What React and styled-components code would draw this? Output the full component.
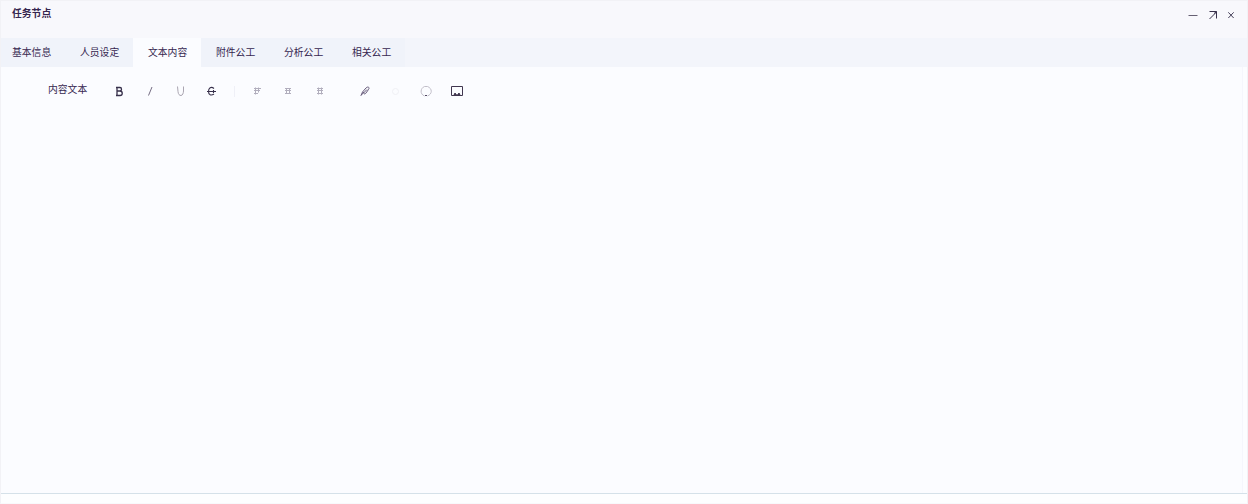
import React, { useState } from "react";
import styled, { createGlobalStyle } from "styled-components";

const GlobalStyle = createGlobalStyle`
    * {
        box-sizing: border-box;
    }
    body {
        margin: 0;
        background-color: #fcfdff;
        font-family: "Liberation Sans", "Noto Sans CJK SC", sans-serif;
    }
`;

const Window = styled.div`
    height: 504px;
    display: flex;
    flex-direction: column;
    border: 1px solid #f2f2f6;
    border-bottom-color: #f8f9fc;
    color: #35264f;
`;

const TitleBar = styled.header`
    height: 37px;
    display: flex;
    justify-content: space-between;
    padding: 5px 12px 0 11px;
    background-color: #f8f8fc;
`;

const Title = styled.h1`
    margin: 0;
    font-size: 9.8px;
    line-height: 15px;
    font-weight: 700;
`;

const Controls = styled.div`
    display: flex;
    gap: 8px;
    padding-top: 3px;
`;

const IconButton = styled.button`
    display: flex;
    align-items: center;
    justify-content: center;
    width: ${({ $width }) => $width || 12}px;
    height: 12px;
    padding: 0;
    border: none;
    background: none;
    color: ${({ $color }) => $color || "#37304b"};
    cursor: pointer;
`;

const TabBar = styled.nav`
    height: 29px;
    display: flex;
    background-color: #f3f5fb;
`;

const Tab = styled.button`
    width: ${({ $width }) => $width}px;
    padding: 0 0 2px ${({ $first }) => ($first ? 11 : 15)}px;
    border: none;
    background-color: ${({ $active }) => ($active ? "#fbfcff" : "#f0f3fa")};
    color: inherit;
    font-family: inherit;
    font-size: 9.8px;
    text-align: left;
    white-space: nowrap;
    cursor: pointer;
`;

const Editor = styled.main`
    flex: 1;
    margin: 0 4px 0 0;
    border-right: 1px solid #f5f6fc;
    background-color: #fbfcff;
`;

const Toolbar = styled.div`
    display: flex;
    align-items: center;
    height: 48px;
    padding-left: 47px;
`;

const FieldLabel = styled.span`
    width: 63px;
    padding-bottom: 4px;
    font-size: 9.8px;
`;

const Tools = styled.div`
    display: flex;
    align-items: center;
    gap: ${({ $gap }) => $gap}px;

    button {
        width: 16px;
    }
`;

const Divider = styled.span`
    width: 1px;
    height: 11px;
    margin: 0 14px 0 15px;
    background-color: #eff0f7;
`;

const Spacer = styled.span`
    width: 29px;
`;

const Footer = styled.footer`
    height: 10px;
    border-top: 1px solid #d5e1e9;
    background-color: #fdfeff;
`;

const Icon = ({ size = 12, width = 1, children }) => (
    <svg width={size} height={size} viewBox="0 0 12 12" fill="none" stroke="currentColor" strokeWidth={width}>
        {children}
    </svg>
);

const tabs = [
    { label: "基本信息", width: 64 },
    { label: "人员设定", width: 68 },
    { label: "文本内容", width: 68 },
    { label: "附件公工", width: 68 },
    { label: "分析公工", width: 68 },
    { label: "相关公工", width: 68 },
];

const formatTools = [
    { name: "bold", width: 1.3, icon: <path d="M4 2.5v8M3 2.5h4c2 0 2 3.5 0 3.5H4M7 6c3 0 3 4.5 0 4.5H3" /> },
    { name: "italic", icon: <path d="M8 2 4.5 10.5" />, color: "#756d83" },
    { name: "underline", icon: <path d="m3.500 1.500.5 5c.3 3 1.500 4 3 4S9.500 8 9.500 6V1.500" />, color: "#aaa5b1" },
    { name: "strike", width: 1.1, icon: <path d="M9 3.500C6 1 3.500 3 3.500 6.500S6 11 9 9M2 6.500h9M8.500 5v3" /> },
];

const alignTools = [
    { name: "left", icon: <path d="M3 3.5h7M3 5.5h6M3 8.5h4M4.5 2.5v7M7.5 2.5v5" /> },
    { name: "center", icon: <path d="M3 3.5h6M3 5.5h6M3 8.5h6M4.5 3v6M7.5 3v6" /> },
    { name: "right", icon: <path d="M3 3.5h6M3 5.5h6M3 8.5h6M4.5 2.5v7M7.5 2.5v7" /> },
];

const insertTools = [
    { name: "link", icon: <path d="M2 10.5 3.500 7 7 3c2-2 4-.5 2.500 1.500L7 8C5.500 10 4 8.500 5.500 7L8 4.500M2 10.500 5 7" />, color: "#65597a" },
    { name: "emoji", icon: <circle cx="6.5" cy="6.5" r="3" />, color: "#f0f0f5" },
    {
        name: "comment",
        icon: (
            <>
                <path d="M4.5 11c-5-2-4-8 0-9.500h3c5 2 5 7.500 0 9.500" />
                <path d="M5 10.5h2" stroke="#514863" />
            </>
        ),
        color: "#c1bec9",
    },
    {
        name: "image",
        icon: (
            <>
                <path d="M.5 1.5h11v9H.5z" />
                <path d="m3 10 1-2 1.5 2zM6.5 10 8 8l1 2z" fill="currentColor" />
            </>
        ),
        color: "#40364f",
    },
];

const ToolGroup = ({ tools, color, gap }) => (
    <Tools $gap={gap}>
        {tools.map((tool) => (
            <IconButton key={tool.name} aria-label={tool.name} $color={tool.color || color}>
                <Icon width={tool.width}>{tool.icon}</Icon>
            </IconButton>
        ))}
    </Tools>
);

export default function App() {
    const [active, setActive] = useState(2);

    return (
        <>
            <GlobalStyle />
            <Window>
                <TitleBar>
                    <Title>任务节点</Title>
                    <Controls>
                        <IconButton aria-label="minimize" $color="#666073">
                            <Icon><path d="M1.5 6.5h9" /></Icon>
                        </IconButton>
                        <IconButton aria-label="maximize">
                            <Icon><path d="M2.5 2.5h7v7M2.5 10l7-7M7 4.5l2.500-2" /></Icon>
                        </IconButton>
                        <IconButton aria-label="close" $width={8}>
                            <Icon size={10} width={1.4}><path d="m2 2 8 8.500M10 2 2 10.500" /></Icon>
                        </IconButton>
                    </Controls>
                </TitleBar>
                <TabBar>
                    {tabs.map((tab, index) => (
                        <Tab
                            key={tab.label}
                            $width={tab.width}
                            $first={index === 0}
                            $active={index === active}
                            onClick={() => setActive(index)}
                        >
                            {tab.label}
                        </Tab>
                    ))}
                </TabBar>
                <Editor>
                    <Toolbar>
                        <FieldLabel>内容文本</FieldLabel>
                        <ToolGroup tools={formatTools} gap={14.7} />
                        <Divider />
                        <ToolGroup tools={alignTools} color="#b1aebd" gap={15.3} />
                        <Spacer />
                        <ToolGroup tools={insertTools} gap={14.7} />
                    </Toolbar>
                </Editor>
                <Footer />
            </Window>
        </>
    );
}
